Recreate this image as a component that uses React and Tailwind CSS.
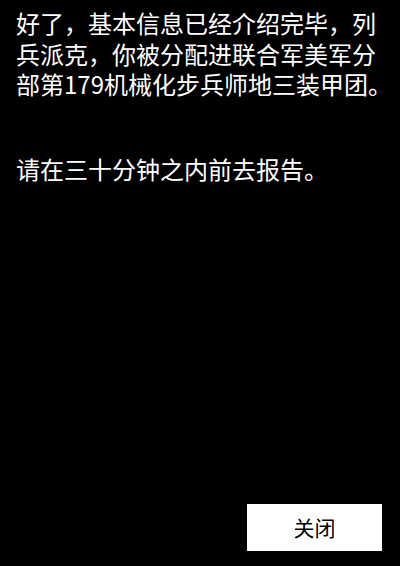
export default function App() {
  return (
    <div
      className="flex h-[566px] w-[400px] flex-col bg-black text-white"
      style={{ fontFamily: '"Noto Sans CJK SC", "Noto Sans", sans-serif' }}
    >
      <div className="pl-4 pr-2 pt-[8px] text-[24px] leading-[30.5px]">
        <p>好了，基本信息已经介绍完毕，列兵派克，你被分配进联合军美军分部第179机械化步兵师地三装甲团。</p>
        <p className="mt-[54px]">请在三十分钟之内前去报告。</p>
      </div>
      <div className="mt-auto flex justify-end pb-[15px] pr-[18px]">
        <button className="h-[47px] w-[135px] bg-white text-[21px] text-black">
          关闭
        </button>
      </div>
    </div>
  );
}
